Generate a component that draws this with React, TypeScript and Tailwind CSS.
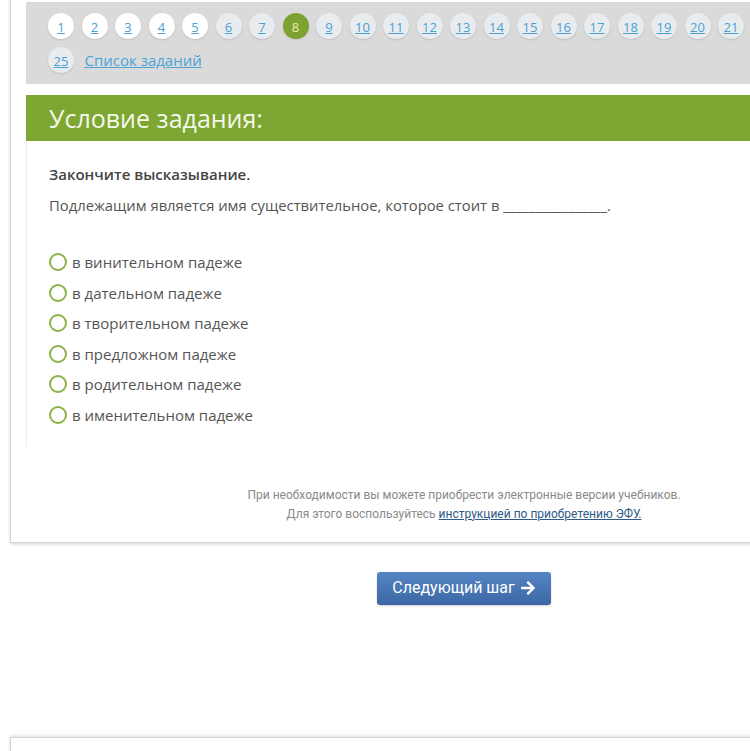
import React from 'react';
import { FaArrowRight } from 'react-icons/fa';

const pages = Array.from({ length: 25 }, (_, i) => i + 1);

const options = [
  'в винительном падеже',
  'в дательном падеже',
  'в творительном падеже',
  'в предложном падеже',
  'в родительном падеже',
  'в именительном падеже',
];

export default function App() {
  const current = 8;

  return (
    <div className="w-full h-[751px] overflow-hidden bg-white font-['Open_Sans',sans-serif]">
      <div className="ml-[10px] -mt-4 w-[908px] border border-[#d6d6d6] bg-white pt-[17px] pl-[15px] pr-[15px] shadow-[0_1px_3px_rgba(0,0,0,0.18)]">
        {/* task navigation */}
        <div className="bg-[#dadada] pl-[22px] pt-[11px] pb-[11px]">
          <div className="flex w-[810px] flex-wrap items-center gap-x-[7.5px] gap-y-2">
            {pages.map((n) => {
              const active = n === current;
              const done = n <= 5;
              return (
                <a
                  key={n}
                  href="#"
                  className={
                    'flex h-[26px] w-[26px] items-center justify-center rounded-full pt-[2px] text-[13px] leading-none shadow-[0_1px_2px_rgba(0,0,0,0.12)] ' +
                    (active
                      ? 'bg-[#7ca232] text-[#e9f3a8]'
                      : done
                      ? 'bg-white text-[#4a9fd5] underline'
                      : 'bg-[#e9ecee] text-[#4a9fd5] underline')
                  }
                >
                  {n}
                </a>
              );
            })}
            <a href="#" className="ml-[3px] text-[15px] text-[#4aa3d8] underline">
              Список заданий
            </a>
          </div>
        </div>

        {/* task */}
        <div className="mt-[11px]">
          <div className="flex h-[46px] items-center bg-[#7ea633] pl-[23px]">
            <h2 className="text-[25px] leading-none text-[#f4f8ea]">Условие задания:</h2>
          </div>
          <div className="border-l border-[#ececec] pl-[22px] pt-[23px] pb-[21px]">
            <p className="text-[15px] font-semibold leading-[20px] text-[#444]">Закончите высказывание.</p>
            <p className="mt-[11px] text-[14.8px] leading-[20px] text-[#555]">
              Подлежащим является имя существительное, которое стоит в ________________.
            </p>
            <div className="mt-[37px] flex flex-col gap-[10.5px]">
              {options.map((o) => (
                <label key={o} className="flex items-center gap-[5px] text-[15px] leading-[20px] text-[#555]">
                  <span className="h-[18px] w-[18px] rounded-full border-2 border-[#8ab347] bg-white" />
                  {o}
                </label>
              ))}
            </div>
          </div>
        </div>

        <div className="pt-[40px] pb-[18px] text-center font-['Roboto',sans-serif] text-[12px] leading-[19px] text-[#8a8a8a]">
          <p>При необходимости вы можете приобрести электронные версии учебников.</p>
          <p>
            Для этого воспользуйтесь{' '}
            <a href="#" className="text-[#2f5a88] underline">
              инструкцией по приобретению ЭФУ.
            </a>
          </p>
        </div>
      </div>

      <div className="ml-[10px] flex w-[908px] justify-center pt-[29px]">
        <button className="flex h-[33px] w-[174px] items-center justify-center gap-[5px] rounded-[3px] bg-gradient-to-b from-[#5585c3] to-[#3d67a5] font-['Roboto',sans-serif] text-[16px] text-white shadow-[0_1px_2px_rgba(0,0,0,0.2)]">
          Следующий шаг
          <FaArrowRight className="h-[16px] w-[16px]" />
        </button>
      </div>

      <div className="ml-[10px] mt-[132px] h-[40px] w-[908px] border border-[#d6d6d6] bg-white shadow-[0_-1px_3px_rgba(0,0,0,0.15)]" />
    </div>
  );
}
